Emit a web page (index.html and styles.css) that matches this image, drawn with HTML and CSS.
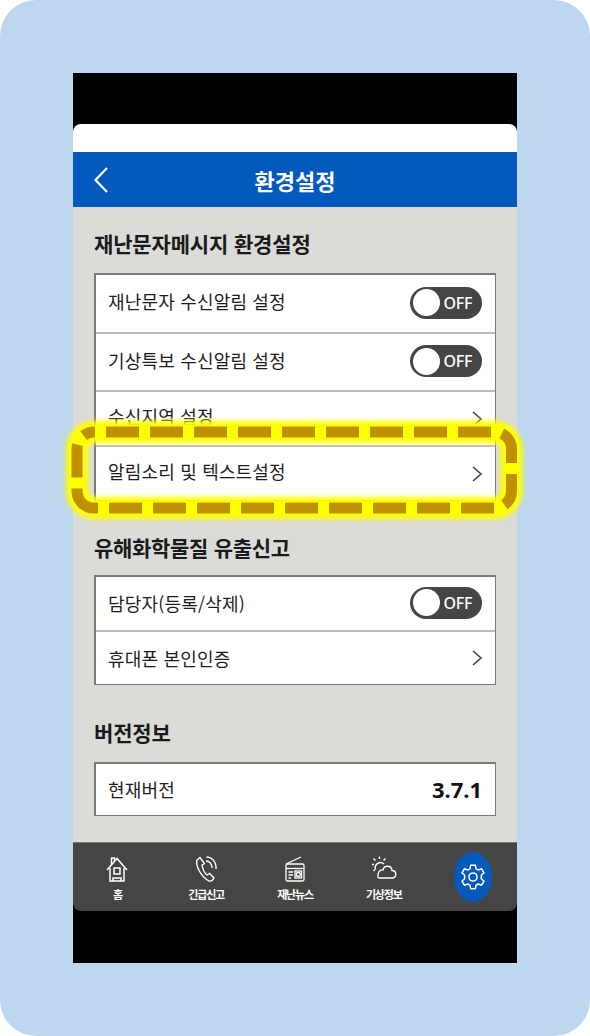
FILE: index.html
```html
<!DOCTYPE html>
<html lang="ko">
<head>
  <meta charset="utf-8">
  <title>환경설정</title>
  <link rel="stylesheet" href="styles.css">
</head>
<body>
  <div class="page">
    <div class="phone">
      <div class="app">
        <div class="status"></div>
        <div class="header">
          <svg class="back" width="16" height="28" viewBox="0 0 16 28" fill="none"><path d="M14 2L2.500 14L14 26" stroke="#fff" stroke-width="2.200"/></svg>
          <span>환경설정</span>
        </div>
        <div class="content">
          <h2 class="first">재난문자메시지 환경설정</h2>
          <div class="list">
            <div class="row"><span>재난문자 수신알림 설정</span><div class="toggle"><i></i><b>OFF</b></div></div>
            <div class="row"><span>기상특보 수신알림 설정</span><div class="toggle"><i></i><b>OFF</b></div></div>
            <div class="row tight"><span>수신지역 설정</span><svg class="chev" width="12" height="18" viewBox="0 0 12 18" fill="none"><path d="M2 2L10 9L2 16" stroke="#444" stroke-width="1.600"/></svg></div>
            <div class="row tight"><span>알림소리 및 텍스트설정</span><svg class="chev" width="12" height="18" viewBox="0 0 12 18" fill="none"><path d="M2 2L10 9L2 16" stroke="#444" stroke-width="1.600"/></svg></div>
          </div>
          <h2 class="second">유해화학물질 유출신고</h2>
          <div class="list">
            <div class="row short"><span>담당자(등록/삭제)</span><div class="toggle"><i></i><b>OFF</b></div></div>
            <div class="row short"><span>휴대폰 본인인증</span><svg class="chev" width="12" height="18" viewBox="0 0 12 18" fill="none"><path d="M2 2L10 9L2 16" stroke="#444" stroke-width="1.600"/></svg></div>
          </div>
          <h2 class="third">버전정보</h2>
          <div class="list">
            <div class="row version"><span>현재버전</span><strong>3.7.1</strong></div>
          </div>
        </div>
        <div class="nav">
          <div class="tab">
            <svg width="24" height="28" viewBox="0 0 24 28" fill="none" stroke="#fff" stroke-width="1.500">
              <path d="M2 15L12 3.500L22 15"/>
              <path d="M6.500 9.500V3H9.500V6"/>
              <path d="M5 13V26H19V13"/>
              <rect x="9" y="13" width="6" height="6"/>
              <path d="M8 26V23H16V26"/>
            </svg>
            <span>홈</span>
          </div>
          <div class="tab">
            <svg width="24" height="28" viewBox="0 0 24 28" fill="none" stroke="#fff" stroke-width="1.400">
              <path d="M6 2.500L3 5C1.500 10 6 21 15 26C17 26.500 19 25 20 23L15.500 18.500L13 20C10.500 18 8.500 13 8 10L10.500 8.500Z"/>
              <path d="M12 6C15.500 6 18 9 18 13"/>
              <path d="M12.500 2C18 2 22.500 7 22 14"/>
            </svg>
            <span>긴급신고</span>
          </div>
          <div class="tab">
            <svg width="24" height="28" viewBox="0 0 24 28" fill="none" stroke="#fff" stroke-width="1.300">
              <path d="M3 9L18 2"/>
              <rect x="3" y="9" width="18" height="17" rx="1.500"/>
              <path d="M3 13.500H21"/>
              <rect x="12" y="16" width="6.500" height="7"/>
              <circle cx="15.250" cy="19.500" r="2"/>
              <path d="M5.500 17H10M5.500 20H10M5.500 23H8"/>
            </svg>
            <span>재난뉴스</span>
          </div>
          <div class="tab">
            <svg width="26" height="28" viewBox="0 0 26 28" fill="none" stroke="#fff" stroke-width="1.400">
              <path d="M8 23H21C26 23 26 15.500 21 15.500C20.500 10 13 10 12 15C7 14 5.500 23 8 23Z"/>
              <path d="M4.500 14.500C3 9 9 5.500 13 9"/>
              <path d="M8.500 1.500V4M1 9.500H3M2.500 3.500L4.500 5.500M14.500 3.500L12.500 5.500M2.500 16L4 14.500"/>
            </svg>
            <span>기상정보</span>
          </div>
          <div class="tab">
            <div class="gear">
              <svg width="28" height="28" viewBox="0 0 24 24" fill="none" stroke="#fff" stroke-width="1.300" stroke-linejoin="round">
                <path d="M10 2H14L14.600 5C15.300 5.300 15.900 5.600 16.500 6L19.400 5L21.400 8.500L19.100 10.500C19.200 11.200 19.200 12.800 19.100 13.500L21.400 15.500L19.400 19L16.500 18C15.900 18.400 15.300 18.700 14.600 19L14 22H10L9.400 19C8.700 18.700 8.100 18.400 7.500 18L4.600 19L2.600 15.500L4.900 13.500C4.800 12.800 4.800 11.200 4.900 10.500L2.600 8.500L4.600 5L7.500 6C8.100 5.600 8.700 5.300 9.400 5Z"/>
                <circle cx="12" cy="12" r="3.500"/>
              </svg>
            </div>
          </div>
        </div>
      </div>
    </div>
    <svg class="mark" width="470" height="110" viewBox="0 0 470 110" fill="none">
      <defs><filter id="glow" x="-10%" y="-30%" width="120%" height="160%"><feGaussianBlur stdDeviation="2.500"/></filter></defs>
      <rect class="mark-glow" x="17" y="17" width="434.500" height="76" rx="17" filter="url(#glow)"/>
      <rect class="mark-dash" x="17" y="17" width="434.500" height="76" rx="17"/>
    </svg>
  </div>
</body>
</html>
```

FILE: styles.css
```css
html, body {
  margin: 0;
  background: #fff;
}

body {
  font-family: "Noto Sans CJK KR", "Noto Sans", sans-serif;
  color: #222;
}

.page {
  position: relative;
  width: 590px;
  height: 1036px;
  box-sizing: border-box;
  padding: 73px;
  background: #bdd7ee;
  border-radius: 36px;
}

.phone {
  height: 890px;
  padding-top: 51px;
  box-sizing: border-box;
  background: #000;
}

.app {
  border-radius: 8px;
  overflow: hidden;
}

.status {
  height: 28px;
  background: #fff;
}

.header {
  height: 55px;
  display: flex;
  align-items: center;
  justify-content: center;
  position: relative;
  background: #0359bd;
  color: #fff;
  font-size: 22px;
  font-weight: 700;
}

.back {
  position: absolute;
  left: 20px;
  top: 14px;
}

.content {
  height: 635px;
  box-sizing: border-box;
  padding: 0 21px;
  background: #dbdbd8;
}

h2 {
  margin: 0;
  font-size: 21px;
  line-height: 30px;
  font-weight: 700;
  letter-spacing: -0.15px;
  color: #1a1a1a;
}

h2.first {
  padding-top: 21px;
  padding-bottom: 15px;
}

h2.second {
  padding-top: 31px;
  padding-bottom: 13px;
  letter-spacing: -0.3px;
}

h2.third {
  padding-top: 32px;
  padding-bottom: 15px;
}

.list {
  background: #fff;
  border: 2px solid #7a7a7a;
  border-bottom-width: 1px;
  border-right-width: 1px;
}

.row {
  height: 58px;
  box-sizing: border-box;
  display: flex;
  align-items: center;
  justify-content: space-between;
  padding: 0 13px 0 12px;
  border-top: 2px solid #bcbcbc;
  font-size: 18px;
}

.row:first-child {
  height: 57px;
  border-top: 0;
}

.row span {
  margin-top: -5px;
  letter-spacing: 0.01em;
  color: #1e1e1e;
}

.row.tight {
  height: 55px;
}

.row.short {
  height: 54px;
}

.row.short:first-child {
  height: 53px;
}

.row.short span,
.row.version span {
  margin-top: -1px;
}

.row.version:first-child {
  height: 51px;
}

.toggle {
  width: 72px;
  height: 32px;
  margin-top: -2px;
  box-sizing: border-box;
  padding: 2.500px;
  display: flex;
  align-items: center;
  gap: 4px;
  background: #454545;
  border-radius: 16px;
  color: #fff;
}

.toggle i {
  width: 27px;
  height: 27px;
  background: #fff;
  border-radius: 50%;
}

.toggle b {
  font-family: "Noto Sans", sans-serif;
  font-size: 16px;
  font-weight: 500;
  letter-spacing: -0.3px;
}

.chev {
  margin-right: -1px;
}

.version strong {
  margin-top: -2px;
  font-family: "Noto Sans", sans-serif;
  font-size: 22px;
  font-weight: 700;
  color: #111;
}

.nav {
  height: 69px;
  display: grid;
  grid-template-columns: repeat(5, 1fr);
  background: #454545;
  border-top: 1px solid #777;
  box-sizing: border-box;
}

.tab {
  display: flex;
  flex-direction: column;
  align-items: center;
  padding-top: 12px;
  color: #fff;
}

.tab span {
  margin-top: 3px;
  font-size: 11px;
  line-height: 16px;
  font-weight: 700;
  letter-spacing: -1.200px;
}

.gear {
  width: 38px;
  height: 50px;
  margin-top: -3px;
  display: flex;
  align-items: center;
  justify-content: center;
  background: #0359bd;
  border-radius: 50%;
}

/* highlight drawn on top of the screenshot */
.mark {
  position: absolute;
  left: 60px;
  top: 415px;
}

.mark-glow {
  stroke: #ffff00;
  stroke-width: 22;
}

.mark-dash {
  stroke: #bf9000;
  stroke-width: 11;
  stroke-dasharray: 33 11;
  stroke-dashoffset: -12;
}
```
